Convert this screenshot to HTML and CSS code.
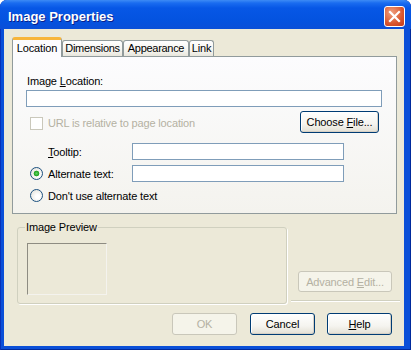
FILE: index.html
```html
<!DOCTYPE html>
<html lang="en">
<head>
    <meta charset="UTF-8">
    <title>Image Properties</title>
    <link rel="stylesheet" href="styles.css">
</head>
<body>
    <div class="window">
        <div class="titlebar">
            <span class="title">Image Properties</span>
            <span class="close">
                <svg width="13" height="13" viewBox="0 0 13 13"><path d="M2 2 L11 11 M11 2 L2 11" stroke="#fff" stroke-width="2.2" stroke-linecap="square"/></svg>
            </span>
        </div>

        <div class="client">
            <div class="tabs">
                <div class="tab active tab-location">Location</div>
                <div class="tab tab-dimensions">Dimensions</div>
                <div class="tab tab-appearance">Appearance</div>
                <div class="tab tab-link">Link</div>
            </div>

            <div class="panel">
                <div class="label">Image <u>L</u>ocation:</div>
                <div class="input input-wide"></div>

                <div class="row check-row">
                    <span class="check"></span>
                    <span class="muted">URL is relative to page location</span>
                    <button class="btn choose">Choose <u>F</u>ile...</button>
                </div>

                <div class="row field-row tooltip-row">
                    <span class="field-label"><u>T</u>ooltip:</span>
                    <div class="input input-short"></div>
                </div>

                <div class="row field-row">
                    <span class="radio checked"></span>
                    <span class="field-label">Alternate text:</span>
                    <div class="input input-short"></div>
                </div>

                <div class="row radio-row">
                    <span class="radio"></span>
                    <span>Don't use alternate text</span>
                </div>
            </div>

            <div class="lower">
                <fieldset class="preview">
                    <legend>Image Preview</legend>
                    <div class="preview-box"></div>
                </fieldset>
                <div class="side">
                    <button class="btn advanced" disabled>Advanced <u>E</u>dit...</button>
                </div>
            </div>

            <div class="actions">
                <button class="btn" disabled>OK</button>
                <button class="btn">Cancel</button>
                <button class="btn"><u>H</u>elp</button>
            </div>
        </div>
    </div>
</body>
</html>
```

FILE: styles.css
```css
body {
    margin: 0;
    background: #fff;
    font-family: "Liberation Sans", Arial, sans-serif;
    font-size: 11px;
    letter-spacing: -0.15px;
    color: #000;
}
.window {
    width: 411px;
    height: 350px;
    box-sizing: border-box;
    background: #0a4fd8;
    border-radius: 7px 7px 0 0;
    padding: 0 7px 4px 4px;
    display: flex;
    flex-direction: column;
    box-shadow: inset 1px 0 #0831b8, inset -1px 0 #002a9c, inset 0 -1px #002a9c;
}
.titlebar {
    height: 29px;
    margin: 0 -7px 0 -4px;
    padding: 3px 6px 0 8px;
    box-sizing: border-box;
    display: flex;
    align-items: center;
    justify-content: space-between;
    border-radius: 7px 7px 0 0;
    background: linear-gradient(#3d8bf5 0, #1a6cf0 3px, #0757e6 8px, #0453e0 20px, #0a4fd8 29px);
}
.title {
    color: #fff;
    font-weight: bold;
    font-size: 13px;
    letter-spacing: 0;
    text-shadow: 1px 1px #0a1f8a;
}
.close {
    width: 21px;
    height: 21px;
    box-sizing: border-box;
    border: 1px solid #fff;
    border-radius: 3px;
    background: radial-gradient(circle at 35% 30%, #f0a080, #d9572e 60%, #c2391a);
    display: flex;
    align-items: center;
    justify-content: center;
}
.client {
    flex: 1;
    background: #ece9d8;
    padding: 8px 7px 11px 8px;
    display: flex;
    flex-direction: column;
}

/* tabs */
.tabs {
    display: flex;
    align-items: flex-end;
    height: 19px;
}
.tab {
    height: 16px;
    box-sizing: border-box;
    border: 1px solid #919b9c;
    border-bottom: none;
    border-radius: 3px 3px 0 0;
    background: linear-gradient(#ffffff, #f3f2ec 70%, #e8e6dc);
    text-align: center;
    line-height: 15px;
    white-space: nowrap;
}
.tab.active {
    height: 20px;
    margin-bottom: -1px;
    position: relative;
    z-index: 1;
    border-top: 3px solid #f7b53a;
    background: #fcfcfe;
    line-height: 16px;
}
.tab-location { width: 50px; }
.tab-dimensions { width: 61px; letter-spacing: -0.3px; }
.tab-appearance { width: 66px; letter-spacing: -0.3px; }
.tab-link { width: 25px; }

.panel {
    height: 158px;
    box-sizing: border-box;
    border: 1px solid #919b9c;
    background: linear-gradient(#fcfcfe, #f4f3ee);
    padding: 18px 14px 0 13px;
}
.label {
    line-height: 13px;
    padding-left: 1px;
    margin-bottom: 2px;
}
.input {
    height: 17px;
    box-sizing: border-box;
    border: 1px solid #7f9db9;
    background: #fff;
}
.input-short {
    width: 212px;
}
.row {
    display: flex;
    align-items: center;
}
.check-row {
    height: 22px;
    margin-top: 4px;
    padding-left: 4px;
}
.check {
    width: 13px;
    height: 13px;
    box-sizing: border-box;
    border: 1px solid #cac8bb;
    background: #fff;
    margin: 3px 5px 0 0;
}
.muted {
    color: #b4b1a2;
    margin-top: 2px;
}
.choose {
    margin-left: auto;
    margin-right: 3px;
    width: 79px;
}
.field-row {
    height: 17px;
    padding-left: 4px;
}
.tooltip-row {
    margin-top: 10px;
    padding-left: 22px;
}
.field-row + .field-row {
    margin-top: 5px;
}
.field-label {
    width: 84px;
}
.radio {
    width: 13px;
    height: 13px;
    box-sizing: border-box;
    border: 1px solid #1c5180;
    border-radius: 50%;
    background: radial-gradient(circle at 60% 60%, #ffffff 20%, #e2e0d8 90%);
    margin-right: 5px;
}
.radio.checked {
    background: radial-gradient(circle, #5ed65e 0, #21a121 2.5px, transparent 3.2px),
                radial-gradient(circle at 60% 60%, #ffffff 20%, #e2e0d8 90%);
}
.radio-row {
    height: 13px;
    margin-top: 7px;
    padding-left: 4px;
}

/* buttons */
.btn {
    height: 22px;
    box-sizing: border-box;
    padding: 0;
    font-family: "Liberation Sans", Arial, sans-serif;
    font-size: 11px;
    letter-spacing: -0.15px;
    color: #000;
    border: 1px solid #003c74;
    border-radius: 3px;
    background: linear-gradient(#ffffff, #f5f4ef 60%, #e3e0d4);
    box-shadow: inset -1px -1px #d6d0c5, inset 1px 1px #fff;
}
.btn:disabled {
    color: #b4b1a2;
    border-color: #c9c7ba;
    background: #f5f4ea;
    box-shadow: none;
}

/* preview group + side */
.lower {
    display: flex;
    margin-top: 7px;
}
.preview {
    width: 270px;
    height: 83px;
    box-sizing: border-box;
    margin: 0 0 0 5px;
    padding: 0 8px 0 7px;
    border: 1px solid #d0d0bf;
    border-radius: 3px;
    box-shadow: 1px 1px #fff;
}
.preview legend {
    padding: 0 1px;
    line-height: 13px;
}
.preview-box {
    width: 80px;
    height: 52px;
    box-sizing: border-box;
    margin: 9px 0 0 2px;
    border-top: 1px solid #8e8c82;
    border-left: 1px solid #8e8c82;
    border-right: 1px solid #f4f3ee;
    border-bottom: 1px solid #f4f3ee;
}
.side {
    flex: 1;
    height: 80px;
    box-sizing: border-box;
    margin: 0 -3px 0 4px;
    padding: 0 8px 8px 0;
    border-bottom: 1px solid #d0d0bf;
    box-shadow: 0 1px #fff;
    display: flex;
    align-items: flex-end;
    justify-content: flex-end;
}
.advanced {
    width: 94px;
    height: 21px;
}

.actions {
    display: flex;
    justify-content: flex-end;
    gap: 12px;
    margin-top: 9px;
    padding-right: 5px;
}
.actions .btn {
    width: 65px;
}
.actions .btn:first-child {
    margin-right: 1px;
}
```
